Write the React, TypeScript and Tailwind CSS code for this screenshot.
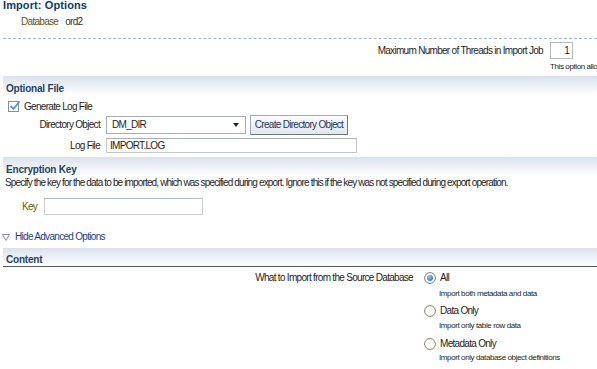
import React from "react";

function Band({ title, line }: { title: string; line?: boolean }) {
  return (
    <div
      className={`ml-[3px] h-[19px] flex items-end pl-[3px] bg-gradient-to-b from-[#dbe1ec] to-[#ffffff] ${
        line ? "border-b border-[#555a60]" : ""
      }`}
    >
      <span className="text-[10px] leading-[12px] font-bold tracking-[-0.2px] text-[#1e4366]">
        {title}
      </span>
    </div>
  );
}

function Radio({ checked }: { checked?: boolean }) {
  return (
    <svg width="12" height="12" viewBox="0 0 12 12" className="shrink-0">
      <defs>
        <radialGradient id="rg" cx="0.4" cy="0.35" r="0.7">
          <stop offset="0" stopColor="#9cc6f2" />
          <stop offset="1" stopColor="#2f6fc4" />
        </radialGradient>
      </defs>
      <circle cx="6" cy="6" r="5.4" fill="#fff" stroke={checked ? "#6f8199" : "#8c8172"} strokeWidth="1" />
      {checked && <circle cx="6" cy="6" r="3" fill="url(#rg)" />}
    </svg>
  );
}

export default function App() {
  return (
    <div className="w-[597px] h-[369px] overflow-hidden bg-white text-[10px] leading-[12px] tracking-[-0.7px] text-[#1e1e1e] font-['Liberation_Sans',Arial,sans-serif]">
      {/* Title */}
      <div className="pl-[3px] h-[11px] leading-[11px] text-[11px] font-bold tracking-[0.1px] text-[#0d3a62]">
        Import: Options
      </div>
      <div className="mt-[5px] h-[11px] leading-[11px] pl-[21px] flex">
        <span className="text-[#6b5412]">Database</span>
        <span className="ml-[7px] text-[#333]">ord2</span>
      </div>
      <div className="mt-[11px] ml-[3px] border-t border-dashed border-[#aab3c3]" />

      {/* Threads row */}
      <div className="mt-[3px] h-[17px] flex items-center justify-end">
        <span>Maximum Number of Threads in Import Job</span>
        <div className="ml-[7px] mr-[24px] w-[23px] h-[17px] border border-[#b4b9c0] flex items-center justify-end pr-[3px]">
          1
        </div>
      </div>
      <div className="mt-[3px] h-[10px] leading-[10px] pl-[550px] whitespace-nowrap text-[8px] tracking-[-0.4px]">
        This option allows you to specify the number of threads
      </div>

      {/* Optional File */}
      <div className="mt-[4px]">
        <Band title="Optional File" />
      </div>
      <div className="mt-[4px] h-[15px] flex items-center pl-[8px]">
        <div className="w-[11px] h-[11px] border border-[#8e8e8e] bg-white relative">
          <svg width="12" height="11" viewBox="0 0 12 11" className="absolute left-[0px] top-[-2px]">
            <path d="M1.5 6 L4.5 9 L10.5 1.5" fill="none" stroke="#4f95dc" strokeWidth="1.8" />
          </svg>
        </div>
        <span className="ml-[5px]">Generate Log File</span>
      </div>
      <div className="mt-[1px] h-[20px] flex items-center">
        <span className="w-[100px] text-right">Directory Object</span>
        <div className="ml-[6px] w-[140px] h-[18px] border border-[#a8aeb6] bg-white flex items-center pl-[5px] relative">
          <span>DM_DIR</span>
          <div className="absolute right-[3px] top-[2px] w-[12px] h-[12px] flex items-center justify-center">
            <svg width="6" height="4" viewBox="0 0 6 4">
              <path d="M0 0 L6 0 L3 4 Z" fill="#222" />
            </svg>
          </div>
        </div>
        <div className="ml-[4px] w-[98px] h-[20px] border border-[#a0aab6] border-b-[#6f7a86] border-r-[#6f7a86] bg-gradient-to-b from-[#fbfcfd] to-[#e2e7ee] flex items-center justify-center text-[#1d355c]">
          Create Directory Object
        </div>
      </div>
      <div className="mt-[3px] h-[15px] flex items-center">
        <span className="w-[100px] text-right">Log File</span>
        <div className="ml-[6px] w-[251px] h-[15px] border border-[#c2c7cd] border-t-[#a9afb7] bg-white flex items-center pl-[3px]">
          IMPORT.LOG
        </div>
      </div>

      {/* Encryption Key */}
      <div className="mt-[4px]">
        <Band title="Encryption Key" />
      </div>
      <div className="mt-[1px] pl-[5px] whitespace-nowrap tracking-[-0.85px]">
        Specify the key for the data to be imported, which was specified during export. Ignore this if the key was not specified during export operation.
      </div>
      <div className="mt-[9px] h-[17px] flex items-center">
        <span className="pl-[22px] text-[#6b5412]">Key</span>
        <div className="ml-[7px] w-[159px] h-[17px] border border-[#ccd0d5] border-t-[#b5bac1] bg-white" />
      </div>
      <div className="mt-[16px] h-[12px] flex items-center">
        <svg width="8" height="7" viewBox="0 0 8 7" className="ml-[2px]">
          <path d="M0.5 0.5 L7.5 0.5 L4 6.5 Z" fill="none" stroke="#8a8f96" strokeWidth="1" />
        </svg>
        <span className="ml-[5px] text-[#1c3f8c]">Hide Advanced Options</span>
      </div>

      {/* Content */}
      <div className="mt-[5px]">
        <Band title="Content" line />
      </div>
      <div className="flex">
        <div className="w-[413px] text-right">
          <div className="mt-[4px] h-[13px] flex items-center justify-end">What to Import from the Source Database</div>
        </div>
        <div className="ml-[11px] flex flex-col">
          <div className="mt-[4px] h-[13px] flex items-center">
            <Radio checked />
            <span className="ml-[4px]">All</span>
          </div>
          <div className="mt-[5px] h-[10px] leading-[10px] pl-[15px] text-[8px] tracking-[-0.4px] whitespace-nowrap">
            Import both metadata and data
          </div>
          <div className="mt-[5px] h-[13px] flex items-center">
            <Radio />
            <span className="ml-[4px]">Data Only</span>
          </div>
          <div className="mt-[4px] h-[10px] leading-[10px] pl-[15px] text-[8px] tracking-[-0.4px] whitespace-nowrap">
            Import only table row data
          </div>
          <div className="mt-[6px] h-[13px] flex items-center">
            <Radio />
            <span className="ml-[4px]">Metadata Only</span>
          </div>
          <div className="mt-[3px] h-[10px] leading-[10px] pl-[15px] text-[8px] tracking-[-0.4px] whitespace-nowrap">
            Import only database object definitions
          </div>
        </div>
      </div>
    </div>
  );
}
